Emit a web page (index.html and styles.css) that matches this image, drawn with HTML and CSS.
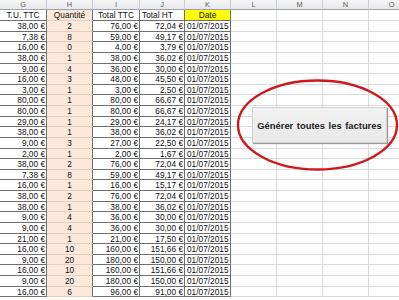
FILE: index.html
```html
<!DOCTYPE html>
<html lang="fr">
<head>
<meta charset="utf-8">
<title>Factures</title>
<link rel="stylesheet" href="styles.css">
</head>
<body>
<div class="sheet">
  <div class="h">G</div><div class="h">H</div><div class="h">I</div><div class="h">J</div><div class="h">K</div><div class="h">L</div><div class="h">M</div><div class="h">N</div><div class="h">O</div>
  <div class="c t">T.U. TTC</div><div class="c q">Quantité</div><div class="c t">Total TTC</div><div class="c tl">Total HT</div><div class="c y">Date</div><div class="c e"></div><div class="c e"></div><div class="c e"></div><div class="c e"></div>
  <div class="c n">38,00 €</div><div class="c q">2</div><div class="c n">76,00 €</div><div class="c n">72,04 €</div><div class="c d">01/07/2015</div><div class="c e"></div><div class="c e"></div><div class="c e"></div><div class="c e"></div>
  <div class="c n">7,38 €</div><div class="c q">8</div><div class="c n">59,00 €</div><div class="c n">49,17 €</div><div class="c d">01/07/2015</div><div class="c e"></div><div class="c e"></div><div class="c e"></div><div class="c e"></div>
  <div class="c n">16,00 €</div><div class="c q">0</div><div class="c n">4,00 €</div><div class="c n">3,79 €</div><div class="c d">01/07/2015</div><div class="c e"></div><div class="c e"></div><div class="c e"></div><div class="c e"></div>
  <div class="c n">38,00 €</div><div class="c q">1</div><div class="c n">38,00 €</div><div class="c n">36,02 €</div><div class="c d">01/07/2015</div><div class="c e"></div><div class="c e"></div><div class="c e"></div><div class="c e"></div>
  <div class="c n">9,00 €</div><div class="c q">4</div><div class="c n">36,00 €</div><div class="c n">30,00 €</div><div class="c d">01/07/2015</div><div class="c e"></div><div class="c e"></div><div class="c e"></div><div class="c e"></div>
  <div class="c n">16,00 €</div><div class="c q">3</div><div class="c n">48,00 €</div><div class="c n">45,50 €</div><div class="c d">01/07/2015</div><div class="c e"></div><div class="c e"></div><div class="c e"></div><div class="c e"></div>
  <div class="c n">3,00 €</div><div class="c q">1</div><div class="c n">3,00 €</div><div class="c n">2,50 €</div><div class="c d">01/07/2015</div><div class="c e"></div><div class="c e"></div><div class="c e"></div><div class="c e"></div>
  <div class="c n">80,00 €</div><div class="c q">1</div><div class="c n">80,00 €</div><div class="c n">66,67 €</div><div class="c d">01/07/2015</div><div class="c e"></div><div class="c e"></div><div class="c e"></div><div class="c e"></div>
  <div class="c n">80,00 €</div><div class="c q">1</div><div class="c n">80,00 €</div><div class="c n">66,67 €</div><div class="c d">01/07/2015</div><div class="c e"></div><div class="c e"></div><div class="c e"></div><div class="c e"></div>
  <div class="c n">29,00 €</div><div class="c q">1</div><div class="c n">29,00 €</div><div class="c n">24,17 €</div><div class="c d">01/07/2015</div><div class="c e"></div><div class="c e"></div><div class="c e"></div><div class="c e"></div>
  <div class="c n">38,00 €</div><div class="c q">1</div><div class="c n">38,00 €</div><div class="c n">36,02 €</div><div class="c d">01/07/2015</div><div class="c e"></div><div class="c e"></div><div class="c e"></div><div class="c e"></div>
  <div class="c n">9,00 €</div><div class="c q">3</div><div class="c n">27,00 €</div><div class="c n">22,50 €</div><div class="c d">01/07/2015</div><div class="c e"></div><div class="c e"></div><div class="c e"></div><div class="c e"></div>
  <div class="c n">2,00 €</div><div class="c q">1</div><div class="c n">2,00 €</div><div class="c n">1,67 €</div><div class="c d">01/07/2015</div><div class="c e"></div><div class="c e"></div><div class="c e"></div><div class="c e"></div>
  <div class="c n">38,00 €</div><div class="c q">2</div><div class="c n">76,00 €</div><div class="c n">72,04 €</div><div class="c d">01/07/2015</div><div class="c e"></div><div class="c e"></div><div class="c e"></div><div class="c e"></div>
  <div class="c n">7,38 €</div><div class="c q">8</div><div class="c n">59,00 €</div><div class="c n">49,17 €</div><div class="c d">01/07/2015</div><div class="c e"></div><div class="c e"></div><div class="c e"></div><div class="c e"></div>
  <div class="c n">16,00 €</div><div class="c q">1</div><div class="c n">16,00 €</div><div class="c n">15,17 €</div><div class="c d">01/07/2015</div><div class="c e"></div><div class="c e"></div><div class="c e"></div><div class="c e"></div>
  <div class="c n">38,00 €</div><div class="c q">2</div><div class="c n">76,00 €</div><div class="c n">72,04 €</div><div class="c d">01/07/2015</div><div class="c e"></div><div class="c e"></div><div class="c e"></div><div class="c e"></div>
  <div class="c n">38,00 €</div><div class="c q">1</div><div class="c n">38,00 €</div><div class="c n">36,02 €</div><div class="c d">01/07/2015</div><div class="c e"></div><div class="c e"></div><div class="c e"></div><div class="c e"></div>
  <div class="c n">9,00 €</div><div class="c q">4</div><div class="c n">36,00 €</div><div class="c n">30,00 €</div><div class="c d">01/07/2015</div><div class="c e"></div><div class="c e"></div><div class="c e"></div><div class="c e"></div>
  <div class="c n">9,00 €</div><div class="c q">4</div><div class="c n">36,00 €</div><div class="c n">30,00 €</div><div class="c d">01/07/2015</div><div class="c e"></div><div class="c e"></div><div class="c e"></div><div class="c e"></div>
  <div class="c n">21,00 €</div><div class="c q">1</div><div class="c n">21,00 €</div><div class="c n">17,50 €</div><div class="c d">01/07/2015</div><div class="c e"></div><div class="c e"></div><div class="c e"></div><div class="c e"></div>
  <div class="c n">16,00 €</div><div class="c q">10</div><div class="c n">160,00 €</div><div class="c n">151,66 €</div><div class="c d">01/07/2015</div><div class="c e"></div><div class="c e"></div><div class="c e"></div><div class="c e"></div>
  <div class="c n">9,00 €</div><div class="c q">20</div><div class="c n">180,00 €</div><div class="c n">150,00 €</div><div class="c d">01/07/2015</div><div class="c e"></div><div class="c e"></div><div class="c e"></div><div class="c e"></div>
  <div class="c n">16,00 €</div><div class="c q">10</div><div class="c n">160,00 €</div><div class="c n">151,66 €</div><div class="c d">01/07/2015</div><div class="c e"></div><div class="c e"></div><div class="c e"></div><div class="c e"></div>
  <div class="c n">9,00 €</div><div class="c q">20</div><div class="c n">180,00 €</div><div class="c n">150,00 €</div><div class="c d">01/07/2015</div><div class="c e"></div><div class="c e"></div><div class="c e"></div><div class="c e"></div>
  <div class="c n">16,00 €</div><div class="c q">6</div><div class="c n">96,00 €</div><div class="c n">91,00 €</div><div class="c d">01/07/2015</div><div class="c e"></div><div class="c e"></div><div class="c e"></div><div class="c e"></div>
</div>
<svg class="ring" width="164" height="94" viewBox="0 0 164 94" aria-hidden="true">
  <ellipse cx="81.5" cy="46" rx="79.5" ry="44.5" fill="none" stroke="#d0191b" stroke-width="2.4"/>
</svg>
<div class="btn">Générer toutes les factures</div>
</body>
</html>
```
FILE: styles.css
```css
html, body {
  margin: 0;
  padding: 0;
  background: #ffffff;
  overflow: hidden;
}

body {
  width: 399px;
  height: 300px;
  position: relative;
  font-family: "Liberation Sans", Arial, sans-serif;
}

.sheet {
  display: grid;
  grid-template-columns: 47px 46px 47px 45px 46px 46px 46px 46px 46px;
  grid-template-rows: 10px 11px repeat(26, 10.63px);
  width: 415px;
}

.h {
  box-sizing: border-box;
  background: linear-gradient(#f5f5f5, #e7e8ea);
  border-right: 1px solid #c9cbcf;
  border-bottom: 1px solid #9ea3a9;
  color: #5b5b5b;
  font-size: 7.4px;
  line-height: 9px;
  text-align: center;
}

.c {
  box-sizing: border-box;
  border-right: 1px solid #6f6f6f;
  border-bottom: 1px solid #6f6f6f;
  font-size: 8.3px;
  line-height: 10px;
  color: #111111;
  padding: 0 2px;
  white-space: nowrap;
  overflow: hidden;
}

.t { text-align: center; }
.tl { text-align: left; padding-left: 2px; }
.n { text-align: right; padding-right: 1px; }
.d { text-align: left; padding-left: 2px; }

.q {
  text-align: center;
  background: #fde9d9;
  border-bottom-color: #e9cdbb;
}

.y {
  text-align: center;
  background: #ffff00;
}

.e {
  border-right-color: #d9dadc;
  border-bottom-color: #d9dadc;
}

.ring {
  position: absolute;
  left: 236px;
  top: 79px;
}

.btn {
  position: absolute;
  left: 252px;
  top: 107px;
  width: 135px;
  height: 36px;
  box-sizing: border-box;
  background: linear-gradient(#f2f2f2, #e9e9e9);
  border: 1px solid #cfcfcf;
  box-shadow: 1px 1px 1px #9a9a9a;
  color: #1c1c1c;
  font-weight: bold;
  font-size: 9.4px;
  word-spacing: 1px;
  display: flex;
  align-items: center;
  justify-content: center;
  white-space: nowrap;
}
```
